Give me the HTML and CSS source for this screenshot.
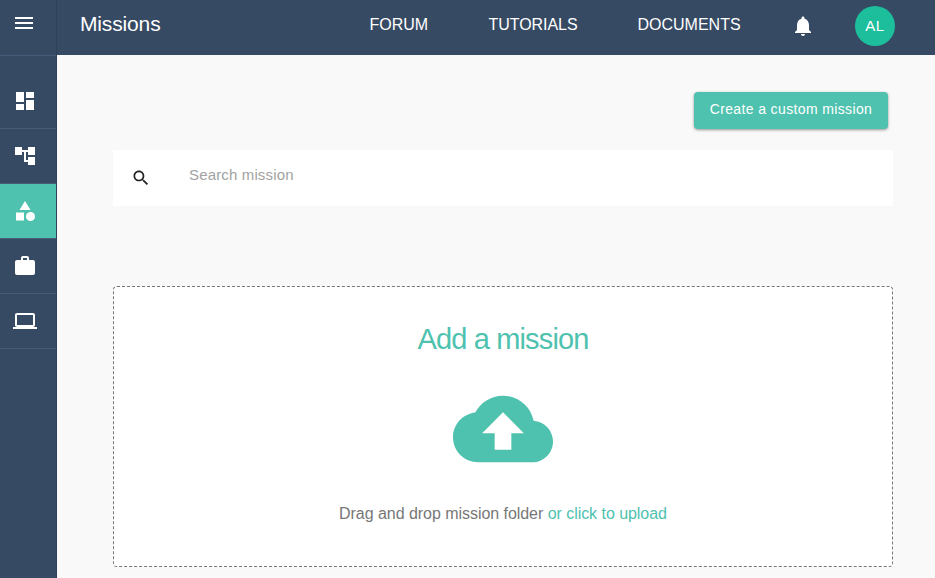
FILE: index.html
```html
<!DOCTYPE html>
<html lang="en">
<head>
<meta charset="utf-8">
<title>Missions</title>
<link rel="stylesheet" href="styles.css">
</head>
<body>
<div class="app">
  <nav class="sidebar">
    <a class="menu"><svg class="icon" viewBox="0 0 24 24"><path d="M3 18h18v-2H3v2zm0-5h18v-2H3v2zm0-7v2h18V6H3z"/></svg></a>
    <div class="items">
      <a class="item"><svg class="icon" viewBox="0 0 24 24"><path d="M3 13h8V3H3v10zm0 8h8v-6H3v6zm10 0h8V11h-8v10zm0-18v6h8V3h-8z"/></svg></a>
      <a class="item"><svg class="icon" viewBox="0 0 24 24"><path d="M22 11V3h-7v3H9V3H2v8h7V8h2v10h4v3h7v-8h-7v3h-2V8h2v3z"/></svg></a>
      <a class="item active"><svg class="icon" viewBox="0 0 24 24"><path d="M12 2l-5.5 9h11z"/><circle cx="17.5" cy="17.5" r="4.5"/><path d="M3 13.500h8v8H3z"/></svg></a>
      <a class="item"><svg class="icon" viewBox="0 0 24 24"><path d="M20 6h-4V4c0-1.110-.89-2-2-2h-4c-1.110 0-2 .89-2 2v2H4c-1.110 0-1.990.89-1.990 2L2 19c0 1.110.89 2 2 2h16c1.110 0 2-.89 2-2V8c0-1.110-.89-2-2-2zm-6 0h-4V4h4v2z"/></svg></a>
      <a class="item"><svg class="icon" viewBox="0 0 24 24"><path d="M20 18c1.100 0 1.990-.9 1.990-2L22 6c0-1.100-.9-2-2-2H4c-1.100 0-2 .9-2 2v10c0 1.100.9 2 2 2H0v2h24v-2h-4zM4 6h16v10H4V6z"/></svg></a>
    </div>
  </nav>
  <div class="page">
    <header class="topbar">
      <h1 class="title">Missions</h1>
      <a class="link forum">FORUM</a>
      <a class="link tutorials">TUTORIALS</a>
      <a class="link documents">DOCUMENTS</a>
      <svg class="icon bell" viewBox="0 0 24 24"><path d="M12 22c1.100 0 2-.9 2-2h-4c0 1.100.89 2 2 2zm6-6v-5c0-3.070-1.640-5.640-4.500-6.320V4c0-.83-.67-1.500-1.500-1.500s-1.500.67-1.500 1.500v.68C7.630 5.360 6 7.920 6 11v5l-2 2v1h16v-1l-2-2z"/></svg>
      <div class="avatar">AL</div>
    </header>
    <main class="content">
      <button class="create">Create a custom mission</button>
      <div class="search">
        <svg class="search-icon" viewBox="0 0 24 24"><path d="M15.500 14h-.79l-.28-.27C15.410 12.590 16 11.110 16 9.500 16 5.910 13.090 3 9.500 3S3 5.910 3 9.500 5.910 16 9.500 16c1.610 0 3.090-.59 4.230-1.570l.27.28v.79l5 4.990L20.490 19l-4.990-5zm-6 0C7.010 14 5 11.990 5 9.500S7.010 5 9.500 5 14 7.010 14 9.500 11.990 14 9.500 14z"/></svg>
        <span class="placeholder">Search mission</span>
      </div>
      <section class="dropzone">
        <h2 class="heading">Add a mission</h2>
        <svg class="cloud" viewBox="0 0 24 24"><path d="M19.350 10.040C18.670 6.590 15.640 4 12 4 9.110 4 6.600 5.640 5.350 8.040 2.340 8.360 0 10.910 0 14c0 3.310 2.690 6 6 6h13c2.760 0 5-2.240 5-5 0-2.640-2.050-4.780-4.650-4.960zM14 13v4h-4v-4H7l5-5 5 5h-3z"/></svg>
        <p class="hint">Drag and drop mission folder <span class="upload">or click to upload</span></p>
      </section>
    </main>
  </div>
</div>
</body>
</html>
```
FILE: styles.css
```css
* { box-sizing: border-box; }
body {
  margin: 0;
  font-family: "Liberation Sans", Arial, sans-serif;
  background: #f9f9f9;
}
h1, h2, p { margin: 0; font-weight: 400; }
.app { display: flex; height: 578px; overflow: hidden; }
.sidebar {
  width: 57px;
  flex: none;
  background: #364a63;
  border-right: 1px solid #2f405b;
}
.icon { width: 24px; height: 24px; fill: #fff; display: block; flex: none; }
.menu {
  display: block;
  height: 56px;
  padding: 11px 12px;
  border-bottom: 1px solid #48597a;
}
.items { padding-top: 18px; }
.item {
  display: block;
  height: 55px;
  padding: 15px 13px;
  border-bottom: 1px solid #4a5b76;
}
.item.active { background: #4ec2ae; }
.page { flex: 1; min-width: 0; }
.topbar {
  display: flex;
  align-items: flex-start;
  height: 55px;
  padding-left: 23px;
  background: #364a63;
  color: #fff;
}
.title { width: 289.5px; padding-top: 12px; font-size: 21px; line-height: 24px; letter-spacing: -.15px; }
.link { padding-top: 15px; font-size: 16px; line-height: 20px; white-space: nowrap; }
.forum { width: 119px; }
.tutorials { width: 149px; letter-spacing: -.05px; }
.documents { width: 153.5px; }
.bell { margin-top: 14px; }
.avatar {
  width: 40px;
  height: 40px;
  margin: 6px 0 0 40px;
  border-radius: 50%;
  background: #1cbe9c;
  font-size: 15px;
  line-height: 40px;
  letter-spacing: .5px;
  text-align: center;
}
.content { padding: 37px 42px 0 56px; }
.create {
  display: block;
  width: 194px;
  height: 37px;
  margin: 0 5px 0 auto;
  padding: 0 0 3px;
  border: 0;
  border-radius: 4px;
  background: #4ec2ae;
  box-shadow: 0 1px 3px rgba(0, 0, 0, .4);
  color: #fff;
  font: 14px/20px "Liberation Sans", Arial, sans-serif;
  letter-spacing: .37px;
  white-space: nowrap;
}
.search {
  display: flex;
  height: 56px;
  margin-top: 21px;
  padding-left: 18px;
  background: #fff;
}
.search-icon { width: 20px; height: 20px; margin-top: 18px; fill: #222; }
.placeholder {
  margin: 15px 0 0 38px;
  font-size: 15px;
  line-height: 20px;
  letter-spacing: .15px;
  color: #a2a2a2;
}
.dropzone {
  display: flex;
  flex-direction: column;
  align-items: center;
  height: 281px;
  margin-top: 80px;
  border: 1px dashed #777;
  border-radius: 4px;
  background: #fff;
}
.heading { margin-top: 36px; font-size: 29px; line-height: 32px; letter-spacing: -.85px; color: #4ec2ae; }
.cloud { width: 100px; height: 100px; margin-top: 24px; fill: #4ec2ae; }
.hint { margin-top: 25px; font-size: 16px; line-height: 20px; letter-spacing: -.045px; color: #777; white-space: nowrap; }
.upload { color: #4ec2ae; }
```
